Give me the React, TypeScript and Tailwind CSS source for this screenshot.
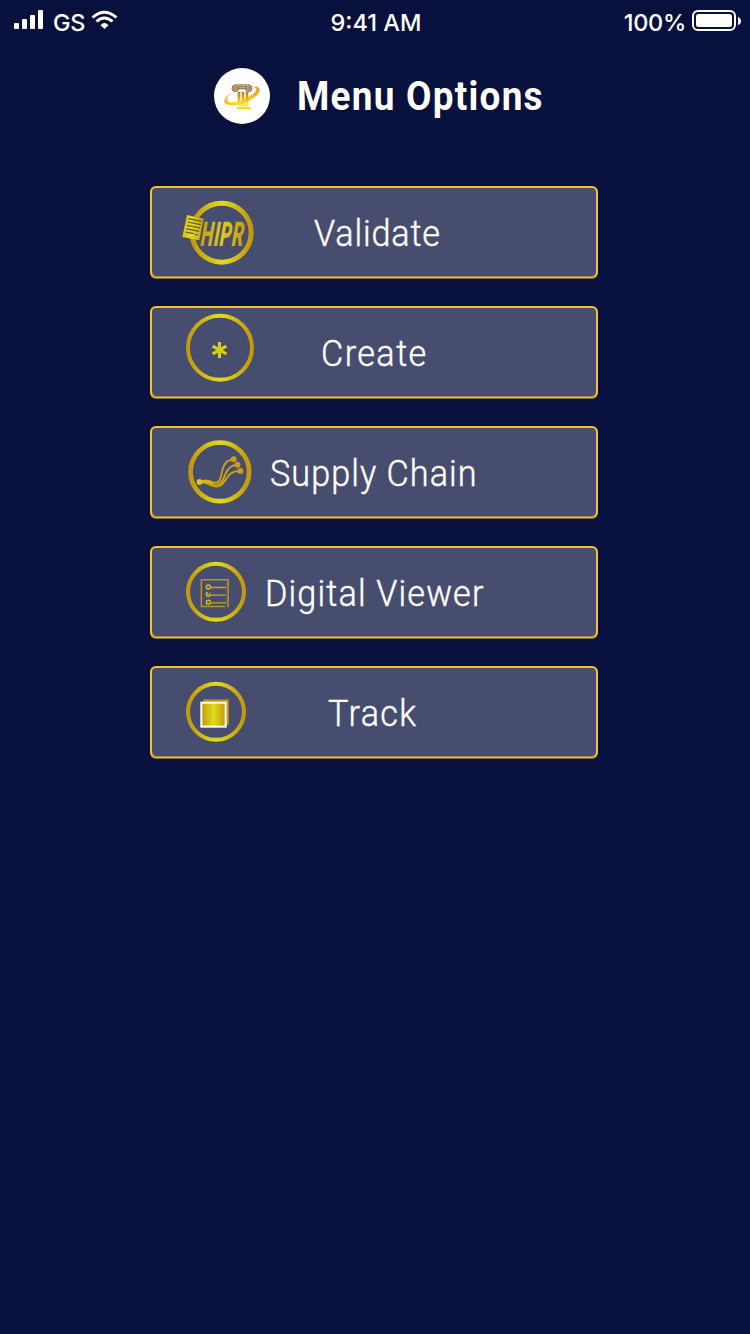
import type { ReactNode } from "react";

const gold = "url(#gold)";

function Defs() {
  return (
    <svg className="absolute h-0 w-0" aria-hidden="true">
      <defs>
        <linearGradient id="gold" x1="0" x2="1" y1="0" y2="0">
          <stop offset="0" stopColor="#c2980d" />
          <stop offset="0.5" stopColor="#dfdc1c" />
          <stop offset="1" stopColor="#c2980d" />
        </linearGradient>
        <linearGradient id="goldSheet" x1="0" x2="1" y1="0" y2="0">
          <stop offset="0" stopColor="#d8bd18" />
          <stop offset="0.4" stopColor="#e2dc1c" />
          <stop offset="1" stopColor="#c79d10" />
        </linearGradient>
        <linearGradient id="goldWord" x1="0" x2="1" y1="0" y2="0">
          <stop offset="0" stopColor="#c79d10" />
          <stop offset="0.5" stopColor="#dbca1a" />
          <stop offset="1" stopColor="#c59c0e" />
        </linearGradient>
        <linearGradient id="pillar" gradientUnits="userSpaceOnUse" x1="0" x2="0" y1="88" y2="148">
          <stop offset="0" stopColor="#94712f" />
          <stop offset="0.4" stopColor="#dba514" />
          <stop offset="0.7" stopColor="#ffe51c" />
          <stop offset="1" stopColor="#f8da1a" />
        </linearGradient>
        <linearGradient id="orbit" x1="0" x2="1" y1="0" y2="0">
          <stop offset="0" stopColor="#f0b71c" />
          <stop offset="0.4" stopColor="#ffe840" />
          <stop offset="1" stopColor="#e3a51c" />
        </linearGradient>
      </defs>
    </svg>
  );
}

function Icon({ children }: { children: ReactNode }) {
  return (
    <svg
      viewBox="21 24 330 264"
      className="col-start-1 row-start-1 h-[88px] w-[110px] overflow-visible"
      fill="none"
      aria-hidden="true"
    >
      {children}
    </svg>
  );
}

function HiprIcon() {
  return (
    <Icon>
      <circle cx="230" cy="158" r="88.500" stroke={gold} strokeWidth="15" />
      <path d="M126 105 176 116 163 181 112 171Z" fill="url(#goldSheet)" />
      <path
        d="M130 116l40 8M128 126l39 8M126 136l39 8M124 146l38 8M122 156l24 5M150 163l9 2"
        stroke="#605a20"
        strokeWidth="3.4"
      />
      <text
        transform="translate(166 198) skewX(-5) scale(0.54 1)"
        fontFamily="Roboto, sans-serif"
        fontSize="102"
        fontWeight="900"
        fontStyle="italic"
        letterSpacing="3"
        fill="url(#goldWord)"
      >
        HIPR
      </text>
    </Icon>
  );
}

function CreateIcon() {
  return (
    <Icon>
      <circle cx="225" cy="143" r="96" stroke={gold} strokeWidth="12" />
      <g stroke="#d9cf18" strokeWidth="9.5">
        <path d="M223.5 126v48" />
        <path d="M203 138.500l41 23" />
        <path d="M244 138.500l-41 23" />
      </g>
    </Icon>
  );
}

function SupplyIcon() {
  return (
    <Icon>
      <circle cx="224.500" cy="155.500" r="88" stroke={gold} strokeWidth="14" />
      <g stroke="#cda411" strokeWidth="5.5">
        <path d="M164 185C192 176 196 187 211 188C240 189 218 121 265 118" />
        <path d="M164 186C190 181 198 194 213 194C246 194 230 138 277 134" />
        <path d="M164 187C190 186 197 201 215 200C247 197 239 151 285 153" />
      </g>
      <path d="M166 185.500c18-6 27-1 36 5" stroke="#d6b916" strokeWidth="8" />
      <circle cx="163.500" cy="186" r="9" fill="#ddc51a" />
      <g fill="#cba012">
        <circle cx="266" cy="118" r="9" />
        <circle cx="277.500" cy="134" r="9" />
        <circle cx="286" cy="153" r="9" />
      </g>
    </Icon>
  );
}

function ViewerIcon() {
  return (
    <Icon>
      <circle cx="213" cy="155.500" r="84" stroke={gold} strokeWidth="12" />
      <path d="M240 199.500H169V119.500H249.500V202" stroke="#b7970f" strokeWidth="4.5" />
      <path d="M245.500 122V200" stroke="#9d8228" strokeWidth="1.500" />
      <g stroke="#d3bd17" strokeWidth="4.5">
        <circle cx="190" cy="141" r="6" />
        <path d="M188 157.500A6 6 0 1 0 196 162" />
        <path d="M186 161l4 3 6-7" strokeWidth="2.500" />
        <circle cx="190" cy="187" r="6" />
      </g>
      <path d="M197 142.500h46M197 165.500h46M197 188.500h46" stroke="#c4a915" strokeWidth="4" />
    </Icon>
  );
}

function TrackIcon() {
  return (
    <Icon>
      <circle cx="213" cy="155.500" r="84" stroke={gold} strokeWidth="12" />
      <rect x="174" y="118" width="78" height="77" fill="#b18b10" />
      <path d="M180 123H246V190" stroke="#c9a817" strokeWidth="3" />
      <rect x="169" y="128" width="73" height="72" fill={gold} stroke="#fff" strokeWidth="6" />
    </Icon>
  );
}

function Logo() {
  return (
    <svg viewBox="24 24 168 168" className="h-14 w-14" fill="none" aria-hidden="true">
      <circle cx="108" cy="108" r="84" fill="#fff" />
      <path
        d="M80 96C62 106 51 120 56 129C66 143 118 134 146 112C162 99 165 86 155 81C150 79 145 79 140 81C152 82 154 90 144 100C123 119 80 132 67 125C59 121 65 109 80 96Z"
        fill="url(#orbit)"
      />
      <path d="M95 95h8v39h-8zM107 95h8v39h-8zM119 95h8v39h-8zM96 134h32v5h-32zM93 141h41v6h-41z" fill="url(#pillar)" />
      <path d="M86 73h44v15h-44z" fill="#94774a" />
      <circle cx="88" cy="85" r="11" fill="#94774a" />
      <circle cx="128" cy="85" r="11" fill="#94774a" />
      <g stroke="#e4d8c4" strokeWidth="2">
        <path d="M95 89c-3 5-13 3-13-4c0-8 11-7 11-1c0 3-5 4-6 1" />
        <path d="M121 89c3 5 13 3 13-4c0-8-11-7-11-1c0 3 5 4 6 1" />
        <path d="M89 77h38M99 83h18" />
      </g>
      <path d="M62 129C82 138 120 127 145 107C128 130 78 142 62 129Z" fill="#f8cf27" />
    </svg>
  );
}

function StatusBar() {
  return (
    <header className="grid h-11 grid-cols-3 font-['Inter',sans-serif] text-[23.5px] leading-[45px] font-medium">
      <div className="flex pl-[14px]">
        <svg className="h-11 w-[30px]" viewBox="0 0 30 44" fill="#fff" aria-hidden="true">
          <rect x="0" y="23" width="5" height="6" rx="1" />
          <rect x="8" y="19" width="5" height="10" rx="1" />
          <rect x="16" y="15" width="5" height="14" rx="1" />
          <rect x="24" y="10" width="5" height="19" rx="1" />
        </svg>
        <span className="ml-[9px] w-[36px] whitespace-nowrap tracking-[-0.4px]">GS</span>
        <svg className="ml-[2px] h-11 w-[28px]" viewBox="0 0 28 44" fill="none" stroke="#fff" strokeWidth="2.8" aria-hidden="true">
          <path d="M1.500 17.500Q13.300 7 25.500 17.500" />
          <path d="M5.500 21.500Q13.300 14.500 21.500 21.500" />
          <path d="M9.500 25.300Q13.300 20.500 17.500 25.300L13.500 29Z" fill="#fff" stroke="none" />
        </svg>
      </div>
      <div className="pl-[2px] text-center whitespace-nowrap">9:41 AM</div>
      <div className="flex justify-end pr-2">
        <span className="mr-[6px] tracking-[-0.3px]">100%</span>
        <svg className="h-11 w-[44px] overflow-visible" viewBox="0 0 44 44" aria-hidden="true">
          <rect x="1" y="11" width="42" height="19" rx="5" fill="none" stroke="#fff" strokeWidth="2" />
          <rect x="4" y="14" width="36" height="13" rx="2.500" fill="#fff" />
          <path d="M46 17q3 1 3 4t-3 4Z" fill="#fff" />
        </svg>
        <span className="w-[6px]" />
      </div>
    </header>
  );
}

const items = [
  { label: "Validate", icon: <HiprIcon />, text: "ml-[162px] tracking-[0.9px]" },
  { label: "Create", icon: <CreateIcon />, text: "ml-[169px] tracking-[1.5px]" },
  { label: "Supply Chain", icon: <SupplyIcon />, text: "ml-[118px] tracking-[1.1px]" },
  { label: "Digital Viewer", icon: <ViewerIcon />, text: "ml-[113px] tracking-[1.2px]" },
  { label: "Track", icon: <TrackIcon />, text: "ml-[176px] tracking-[1.4px]" },
];

export default function App() {
  return (
    <main className="min-h-[1334px] w-[750px] bg-[#08103d] text-white">
      <Defs />
      <StatusBar />
      <div className="mt-6 flex h-14 items-center pl-[214px]">
        <Logo />
        <h1 className="ml-[27px] origin-left scale-x-90 font-['Roboto',sans-serif] text-[41px] leading-[57px] font-bold tracking-[1.4px] whitespace-nowrap">
          Menu Options
        </h1>
      </div>
      <nav className="mt-[62px] ml-[150px] flex w-[448px] flex-col gap-7">
        {items.map(({ label, icon, text }) => (
          <button
            key={label}
            className="grid h-[92px] grid-cols-1 rounded-[6px] border-2 border-b border-[#f5c32f] bg-[#474d6f] text-left shadow-[0_1px_0_#80681f,inset_0_-1px_0_#a08748]"
          >
            {icon}
            <span
              className={`col-start-1 row-start-1 origin-left scale-x-95 font-['Roboto',sans-serif] text-[36px] leading-[92px] font-light whitespace-nowrap [-webkit-text-stroke:0.4px_white] ${text}`}
            >
              {label}
            </span>
          </button>
        ))}
      </nav>
    </main>
  );
}
